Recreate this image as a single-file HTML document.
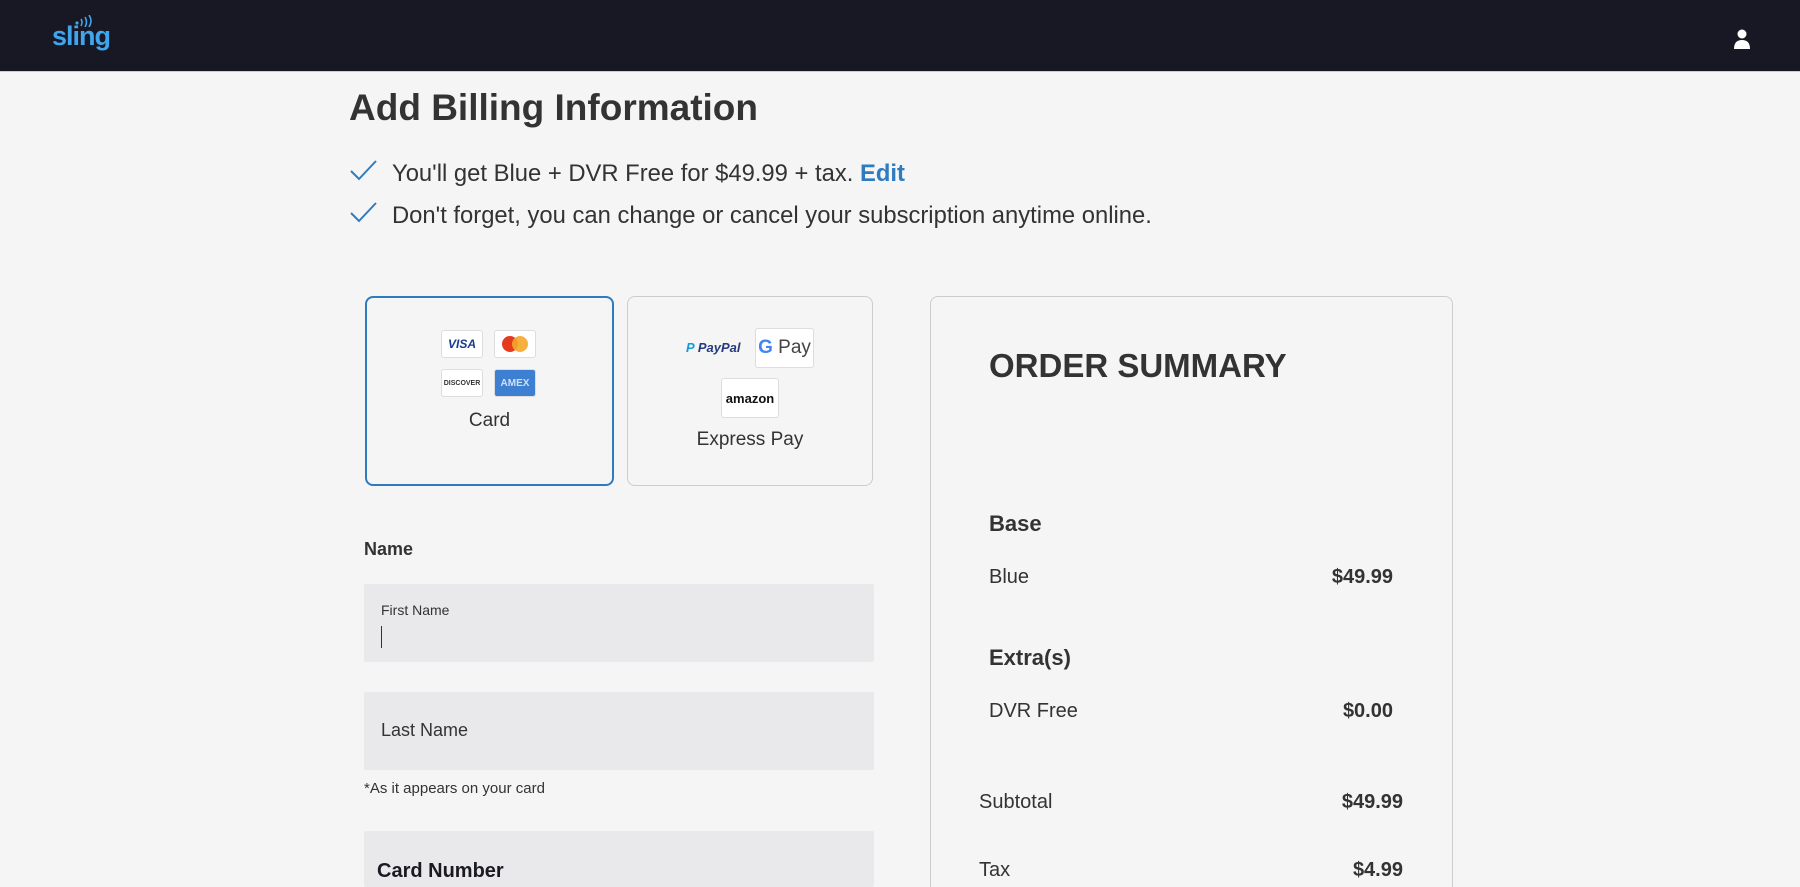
<!DOCTYPE html>
<html style="overflow:hidden;height:887px"><head><meta charset="utf-8"><style>
*{margin:0;padding:0;box-sizing:border-box}
body{width:1800px;height:887px;overflow:hidden;background:#f5f5f5;font-family:"Liberation Sans",sans-serif;color:#333;position:relative}
.hdr{position:absolute;left:0;top:0;width:1800px;height:72px;background:#181824;border-bottom:1px solid #ccc}
.logo{position:absolute;left:52px;top:21px;font-size:27px;font-weight:bold;color:#3fa5ee;letter-spacing:-1px}
.abs{position:absolute;white-space:nowrap}
.box{position:absolute;border-radius:8px;background:#f5f5f5}
.ic{position:absolute;background:#fff;border:1px solid #ddd;border-radius:3px;display:flex;align-items:center;justify-content:center;font-weight:bold}
.field{position:absolute;left:364px;width:510px;background:#e9e9eb;border-radius:2px}
.r{text-align:right}
</style></head><body>
<div class="hdr">
  <div class="logo">sling</div>
  <svg style="position:absolute;left:74px;top:15px" width="20" height="12" viewBox="0 0 20 12"><circle cx="3" cy="8" r="1.6" fill="#3fa5ee"/><path d="M7 4 Q9 7 7 11" stroke="#3fa5ee" stroke-width="1.6" fill="none"/><path d="M11 2 Q14 7 11 12" stroke="#3fa5ee" stroke-width="1.6" fill="none"/><path d="M15 0 Q19 6 15 12" stroke="#3fa5ee" stroke-width="1.6" fill="none"/></svg>
  <svg style="position:absolute;left:1733px;top:29px" width="18" height="21" viewBox="0 0 18 21"><circle cx="9" cy="5" r="4.5" fill="#fff"/><path d="M1 20 Q1 11 9 11 Q17 11 17 20Z" fill="#fff"/></svg>
</div>
<div class="abs" style="left:349px;top:87px;font-size:37px;font-weight:bold;color:#333">Add Billing Information</div>
<svg class="abs" style="left:350px;top:160px" width="27" height="22" viewBox="0 0 27 22"><path d="M1 11 L9 19 L26 1" stroke="#2f7bbf" stroke-width="2" fill="none"/></svg>
<div class="abs" style="left:392px;top:160px;font-size:23.8px">You'll get Blue + DVR Free for $49.99 + tax. <b style="color:#2f7bbf">Edit</b></div>
<svg class="abs" style="left:350px;top:202px" width="27" height="22" viewBox="0 0 27 22"><path d="M1 11 L9 19 L26 1" stroke="#2f7bbf" stroke-width="2" fill="none"/></svg>
<div class="abs" style="left:392px;top:202px;font-size:23.8px">Don't forget, you can change or cancel your subscription anytime online.</div>

<div class="box" style="left:365px;top:296px;width:249px;height:190px;border:2px solid #2f7bbf"></div>
<div class="ic" style="left:441px;top:330px;width:42px;height:28px;color:#1a3a8c;font-size:12px;font-style:italic">VISA</div>
<div class="ic" style="left:494px;top:330px;width:42px;height:28px"><svg width="30" height="18"><circle cx="10" cy="9" r="8" fill="#e63a1e"/><circle cx="20" cy="9" r="8" fill="#f4a72b" opacity=".9"/></svg></div>
<div class="ic" style="left:441px;top:369px;width:42px;height:28px;font-size:7px;color:#333">DISCOVER</div>
<div class="ic" style="left:494px;top:369px;width:42px;height:28px;background:#3d7fd1;color:#cfe0f7;font-size:10px">AMEX</div>
<div class="abs" style="left:365px;width:249px;top:410px;text-align:center;font-size:19px">Card</div>

<div class="box" style="left:627px;top:296px;width:246px;height:190px;border:1.5px solid #ccc"></div>
<div class="abs" style="left:686px;top:340px;font-size:13px;font-weight:bold;font-style:italic;color:#253b80"><span style="color:#169bd7">P</span> PayPal</div>
<div class="ic" style="left:755px;top:328px;width:59px;height:40px;font-weight:normal;font-size:19px;color:#444"><b style="color:#4285f4">G</b>&nbsp;Pay</div>
<div class="ic" style="left:721px;top:378px;width:58px;height:40px;font-size:13px;color:#111">amazon</div>
<div class="abs" style="left:627px;width:246px;top:429px;text-align:center;font-size:19px">Express Pay</div>

<div class="abs" style="left:364px;top:539px;font-size:18px;font-weight:bold">Name</div>
<div class="field" style="top:584px;height:78px"></div>
<div class="abs" style="left:381px;top:602px;font-size:14px">First Name</div>
<div class="abs" style="left:381px;top:626px;width:1px;height:22px;background:#333"></div>
<div class="field" style="top:692px;height:78px"></div>
<div class="abs" style="left:381px;top:720px;font-size:18px">Last Name</div>
<div class="abs" style="left:364px;top:780px;font-size:15px">*As it appears on your card</div>
<div class="field" style="top:831px;height:56px"></div>
<div class="abs" style="left:377px;top:860px;font-size:20px;font-weight:bold;color:#1a1a22">Card Number</div>

<div class="box" style="left:930px;top:296px;width:523px;height:600px;border:1.5px solid #ccc"></div>
<div class="abs" style="left:989px;top:347px;font-size:33px;font-weight:bold">ORDER SUMMARY</div>
<div class="abs" style="left:989px;top:511px;font-size:22px;font-weight:bold">Base</div>
<div class="abs" style="left:989px;top:566px;font-size:20px">Blue</div>
<div class="abs r" style="left:1250px;width:143px;top:566px;font-size:20px;font-weight:bold">$49.99</div>
<div class="abs" style="left:989px;top:645px;font-size:22px;font-weight:bold">Extra(s)</div>
<div class="abs" style="left:989px;top:700px;font-size:20px">DVR Free</div>
<div class="abs r" style="left:1250px;width:143px;top:700px;font-size:20px;font-weight:bold">$0.00</div>
<div class="abs" style="left:979px;top:791px;font-size:20px">Subtotal</div>
<div class="abs r" style="left:1260px;width:143px;top:791px;font-size:20px;font-weight:bold">$49.99</div>
<div class="abs" style="left:979px;top:859px;font-size:20px">Tax</div>
<div class="abs r" style="left:1260px;width:143px;top:859px;font-size:20px;font-weight:bold">$4.99</div>
</body></html>
